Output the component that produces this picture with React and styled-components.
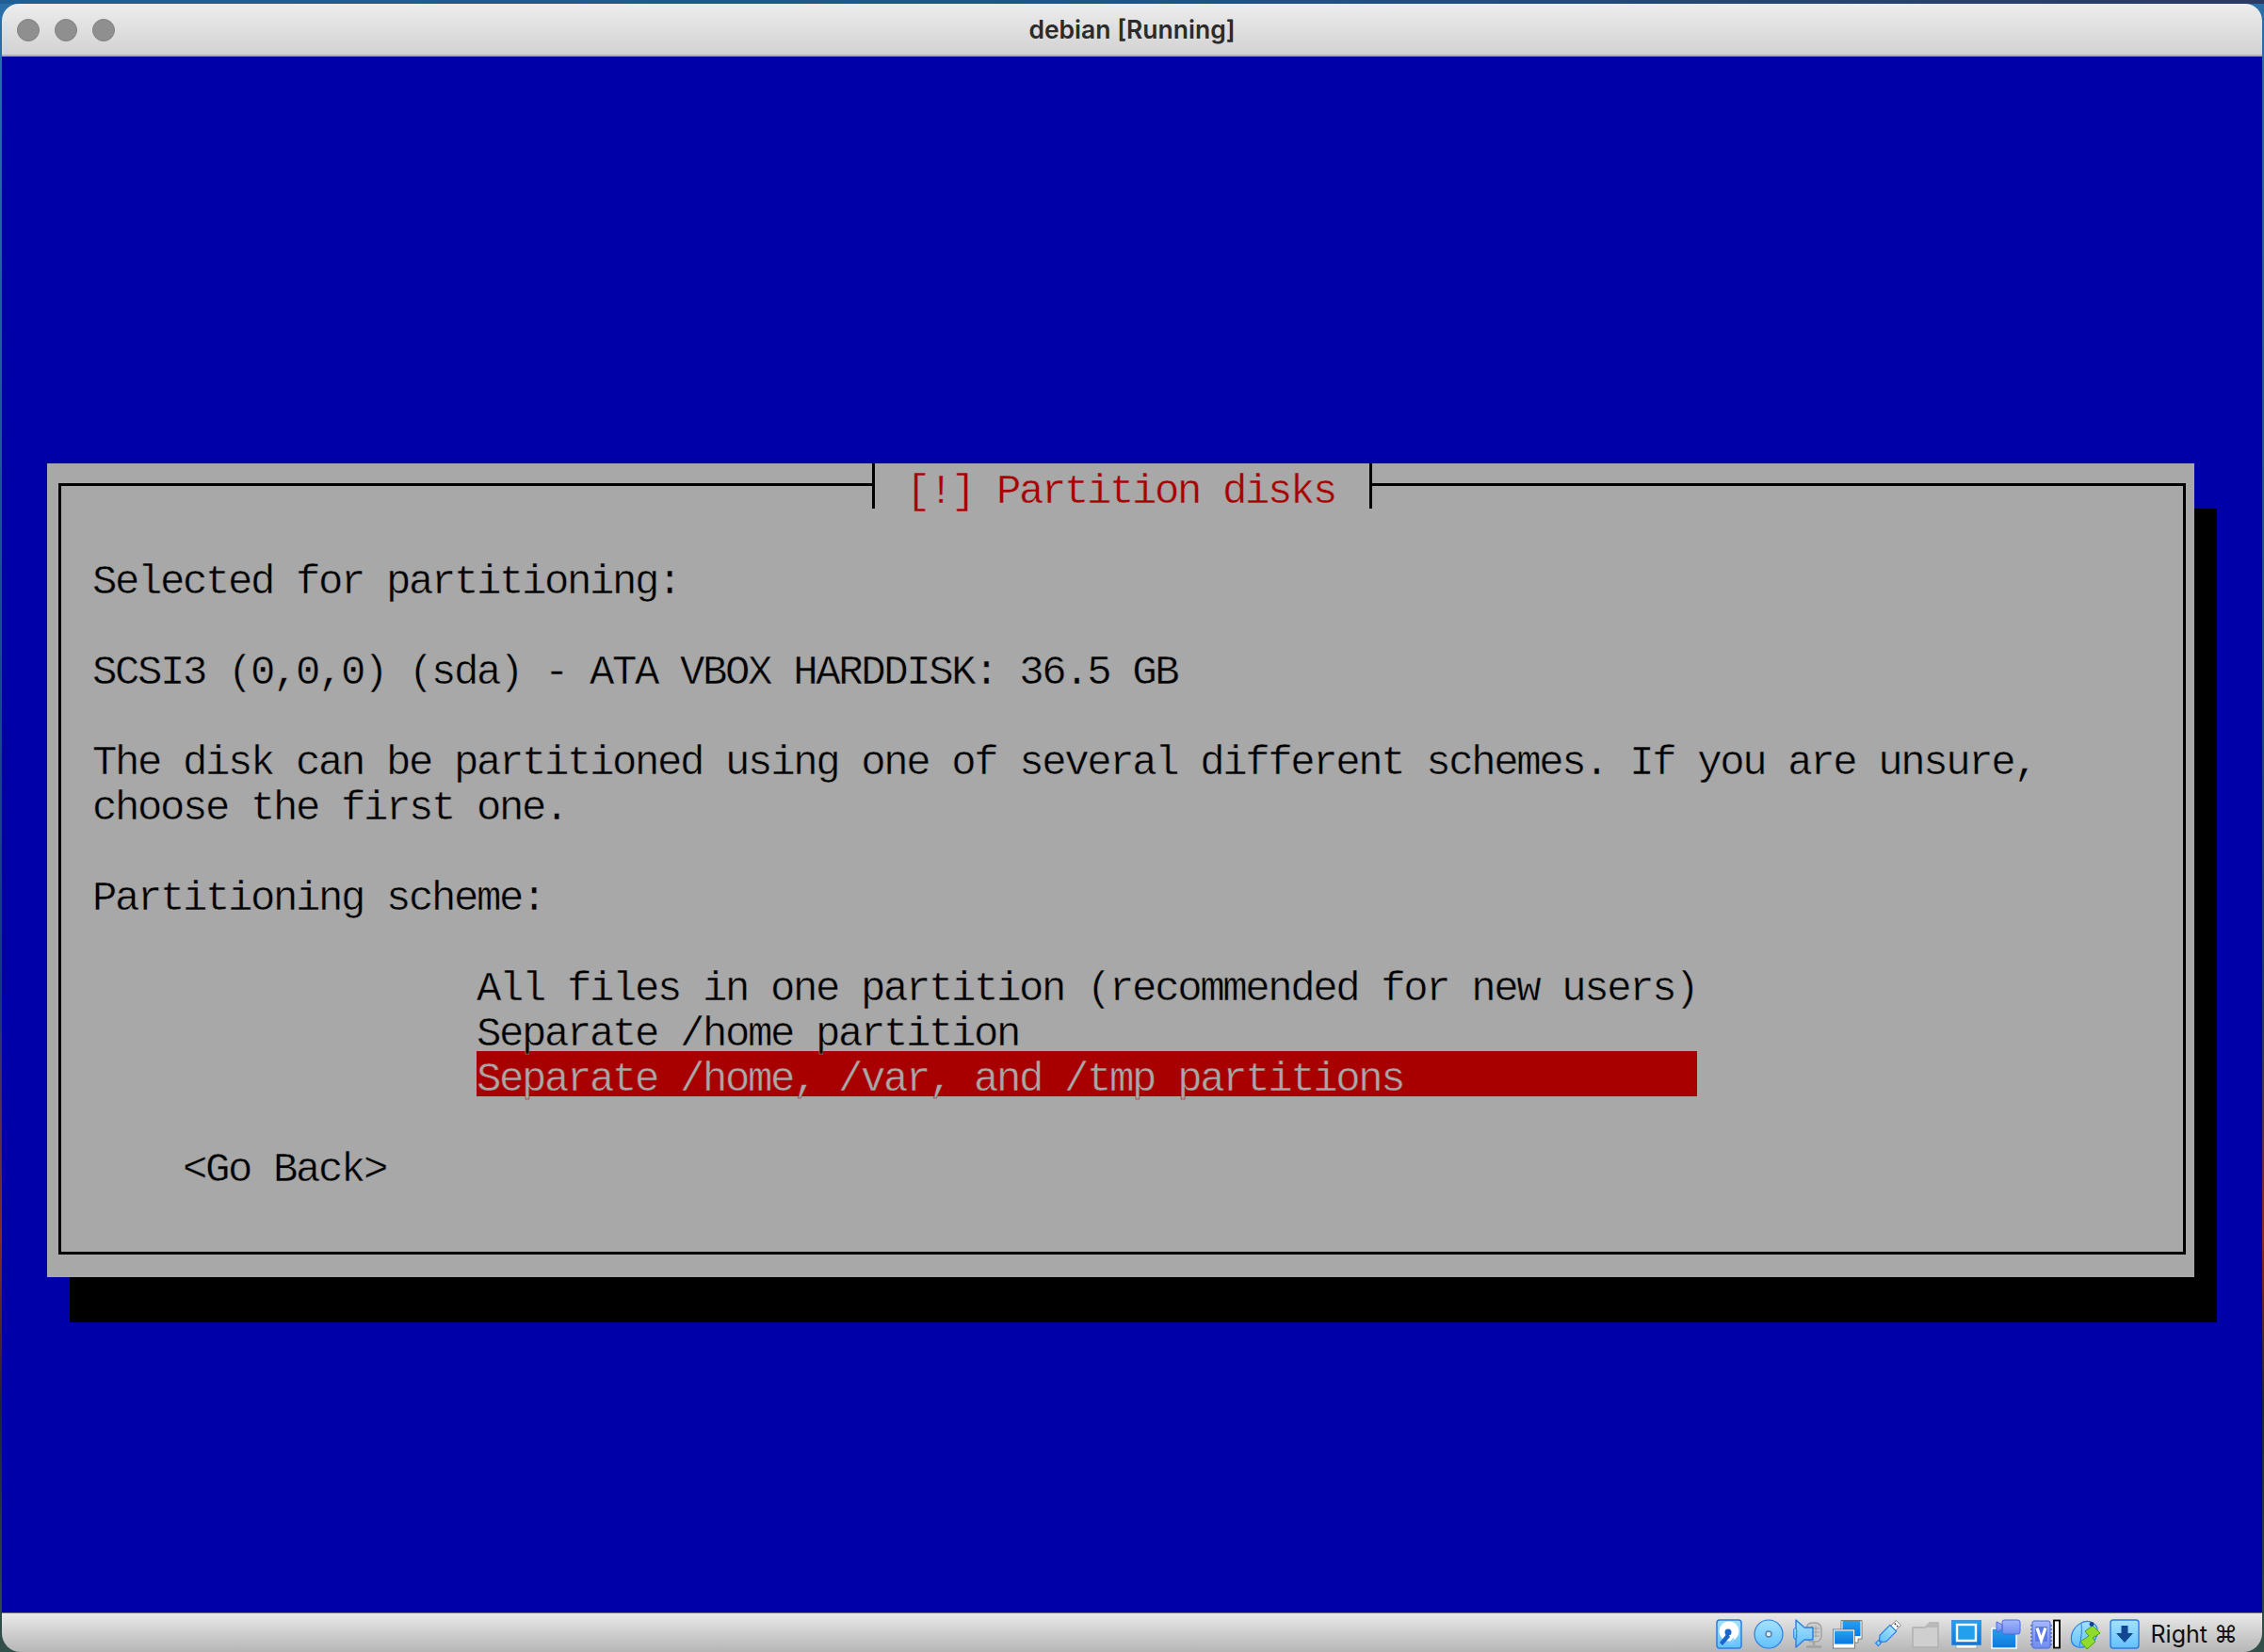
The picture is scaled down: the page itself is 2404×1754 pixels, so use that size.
import React from 'react';
import styled, {createGlobalStyle, css} from 'styled-components';

const cBlue = '#0000a8';
const cGrey = '#a8a8a8';
const cRed = '#a80000';

const GlobalStyle = createGlobalStyle`
  html, body {
    margin: 0;
    padding: 0;
    background: #1d3d66;
  }
`;

const Desktop = styled.div`
  box-sizing: border-box;
  width: 2404px;
  height: 1754px;
  padding: 4px 2px 0;
  overflow: hidden;
  background:
    linear-gradient(90deg, #1f5f96 0%, #1f5585 50%, #2b3a62 100%) top / 100% 4px no-repeat,
    linear-gradient(180deg, #2b6fa8 0%, #163a78 60%, #8a2a20 75%, #1c2430 85%, #33504a 100%);
`;

const Window = styled.div`
  display: flex;
  flex-direction: column;
  height: 1750px;
  border-radius: 18px 18px 20px 20px;
  overflow: hidden;
`;

const TitleBar = styled.header`
  position: relative;
  box-sizing: border-box;
  flex: none;
  height: 56px;
  display: flex;
  align-items: center;
  justify-content: center;
  background: linear-gradient(180deg, #ededed 0%, #d2d2d2 100%);
  border-bottom: 2px solid #adadad;
`;

const Lights = styled.div`
  position: absolute;
  left: 16px;
  top: 16px;
  display: flex;
  gap: 16px;
`;

const Light = styled.span`
  box-sizing: border-box;
  width: 24px;
  height: 24px;
  border-radius: 50%;
  background: #8f8f8f;
  border: 1px solid #808080;
`;

const WindowTitle = styled.h1`
  margin: 0;
  font-family: Inter, "Liberation Sans", sans-serif;
  font-size: 26.5px;
  font-weight: 600;
  color: #2b2b2b;
`;

const Screen = styled.main`
  flex: 1;
  padding: 432px 0 0 48px;
  background: ${cBlue};
`;

const Dialog = styled.section`
  position: relative;
  box-sizing: border-box;
  width: 2280px;
  height: 864px;
  padding: 21px 9px 24px 12px;
  background: ${cGrey};
  box-shadow: 24px 48px 0 #000;
`;

const Frame = styled.div`
  box-sizing: border-box;
  height: 819px;
  padding: 72px 33px 0;
  border: 3px solid #000;
`;

// one terminal line: 24px wide cells, 48px high. The stroke in the background
// colour thins the glyphs down to the console font's weight.
const cell = css`
  display: block;
  box-sizing: border-box;
  height: 48px;
  padding-top: 12px;
  margin: 0;
  font-family: "Liberation Mono", monospace;
  font-size: 44px;
  font-weight: 400;
  line-height: 36px;
  letter-spacing: -2.4px;
  white-space: pre;
  -webkit-text-stroke: 0.5px ${p => p.$selected ? cRed : cGrey};
`;

const DialogTitle = styled.h2`
  ${cell};
  position: absolute;
  top: 0;
  left: 876px;
  width: 531px;
  padding-left: 9px;
  color: ${cRed};
  background: ${cGrey};
  border-left: 3px solid #000;
  border-right: 3px solid #000;
`;

const Line = styled.p`
  ${cell};
  color: #000;
  margin-bottom: ${p => p.$gap ? '48px' : '0'};
`;

const Options = styled.ul`
  list-style: none;
  margin: 0 0 48px 408px;
  padding: 0;
  width: 1296px;
`;

const Option = styled.li`
  ${cell};
  background: ${p => p.$selected ? cRed : 'transparent'};
  color: ${p => p.$selected ? cGrey : '#000'};
`;

const BackButton = styled.div`
  ${cell};
  color: #000;
  margin-left: 96px;
`;

const StatusBar = styled.footer`
  box-sizing: border-box;
  flex: none;
  height: 42px;
  display: flex;
  align-items: center;
  justify-content: flex-end;
  gap: 10px;
  padding: 2px 26px 0 0;
  background: linear-gradient(180deg, #e9e9e9 0%, #b6b6b6 100%);
  border-top: 1px solid #777;
`;

const HostKey = styled.span`
  margin-left: 2px;
  font-family: Inter, "Liberation Sans", sans-serif;
  font-size: 25px;
  color: #111;
`;

const Icon = styled.svg`
  flex: none;
  width: 32px;
  height: 32px;
`;

const Defs = () => (
    <svg width="0" height="0" style={{position: 'absolute'}}>
        <defs>
            <linearGradient id="sky" x1="0" y1="0" x2="0" y2="1">
                <stop offset="0" stopColor="#a5e2ff"/>
                <stop offset="1" stopColor="#62c0fb"/>
            </linearGradient>
            <linearGradient id="deep" x1="0" y1="0" x2="0" y2="1">
                <stop offset="0" stopColor="#2aa0ec"/>
                <stop offset="1" stopColor="#0a78e0"/>
            </linearGradient>
            <linearGradient id="violet" x1="0" y1="0" x2="0" y2="1">
                <stop offset="0" stopColor="#a5b8fb"/>
                <stop offset="1" stopColor="#6f8cf0"/>
            </linearGradient>
        </defs>
    </svg>
);

const HddIcon = () => (
    <Icon viewBox="0 0 32 32">
        <rect x="3" y="1" width="26" height="30" rx="3" fill="url(#sky)" stroke="#2a7de1" strokeWidth="1.5"/>
        <circle cx="16" cy="13" r="10.5" fill="#fff"/>
        <circle cx="15" cy="14" r="3.5" fill="#1c66c8"/>
        <path d="M14 15 L6 25 L9 28 L17 19 Z" fill="#1c66c8"/>
        <path d="M21 19 L12 29 L21 29 Z" fill="url(#sky)"/>
    </Icon>
);

const DiscIcon = () => (
    <Icon viewBox="0 0 32 32">
        <circle cx="16" cy="16" r="15" fill="url(#sky)" stroke="#2a7de1" strokeWidth="1.2"/>
        <circle cx="16" cy="16" r="3" fill="#d7f0ff" stroke="#5f7f9f" strokeWidth="1.4"/>
    </Icon>
);

const AudioIcon = () => (
    <Icon viewBox="0 0 32 32">
        <rect x="14" y="4" width="16" height="20" rx="6" fill="#cdcdcd" stroke="#a2a2a2" strokeWidth="1.5"/>
        <path d="M20 7v13M24 7v13M18 10h10M18 14h10M18 18h10" stroke="#a2a2a2" strokeWidth="1"/>
        <path d="M22 24v4M14 29.5h16" stroke="#a2a2a2" strokeWidth="2.5"/>
        <path d="M3 1 L12 9 H21 V22 H12 L3 30 Z" fill="url(#sky)" stroke="#2a7de1" strokeWidth="1.4" strokeLinejoin="round"/>
        <rect x="0.7" y="10" width="3" height="11" rx="1.2" fill="url(#sky)" stroke="#2a7de1"/>
    </Icon>
);

const NetworkIcon = () => (
    <Icon viewBox="0 0 32 32">
        <path d="M9 1.5 H31 V21 H27 V25 H9 Z" fill="#fff" stroke="#666" strokeWidth="0.8"/>
        <rect x="10.5" y="2" width="19" height="16" fill="url(#deep)"/>
        <rect x="0.5" y="11" width="23" height="20" fill="#fff" stroke="#666" strokeWidth="0.8"/>
        <rect x="2" y="12.5" width="20" height="14" fill="url(#deep)"/>
    </Icon>
);

const UsbIcon = () => (
    <Icon viewBox="0 0 32 32">
        <g transform="rotate(45 16 16) translate(16 16) scale(0.8) translate(-16 -16)">
            <rect x="11.5" y="-5" width="9" height="10" fill="#fff" stroke="#555" strokeWidth="0.8"/>
            <rect x="13" y="-2" width="2" height="2" fill="#333"/>
            <rect x="17" y="-2" width="2" height="2" fill="#333"/>
            <path d="M10 5 H22 V24 L18 29 H14 L10 24 Z" fill="url(#sky)" stroke="#2a7de1" strokeWidth="1.5" strokeLinejoin="round"/>
            <rect x="13.5" y="30.5" width="5" height="5" fill="url(#sky)" stroke="#2a7de1" strokeWidth="1.4"/>
        </g>
    </Icon>
);

const FolderIcon = () => (
    <Icon viewBox="0 0 32 32">
        <path d="M1 9 H14 L19 4 H28 V30 H1 Z" fill="#cfcfcf" stroke="#aeaeae" strokeWidth="1.4" strokeLinejoin="round"/>
        <path d="M19 4 H28 V9 H14 Z" fill="#b9b9b9"/>
    </Icon>
);

const DisplayIcon = () => (
    <Icon viewBox="0 0 32 32">
        <path d="M5 27 H27 V31 H5 Z" fill="#fff" stroke="#888" strokeWidth="0.6"/>
        <rect x="0.5" y="1.5" width="31" height="26" fill="url(#deep)"/>
        <rect x="0.5" y="1.5" width="31" height="26" fill="none" stroke="#3b88d8" strokeWidth="0.8"/>
        <rect x="6" y="6" width="20" height="17" fill="#22a0ee" stroke="#fff" strokeWidth="2.4"/>
    </Icon>
);

const CaptureIcon = () => (
    <Icon viewBox="0 0 32 32">
        <rect x="1" y="10" width="26" height="21" fill="url(#deep)" stroke="#fff" strokeWidth="1.4"/>
        <rect x="12" y="1" width="19" height="15" rx="2.5" fill="url(#violet)" stroke="#4d6bd8" strokeWidth="1"/>
        <path d="M12 6 L6 3 V14 L12 11 Z" fill="url(#violet)" stroke="#4d6bd8" strokeWidth="1"/>
    </Icon>
);

const ChipIcon = () => (
    <Icon viewBox="0 0 32 32">
        <rect x="2" y="2" width="19" height="29" rx="2" fill="url(#violet)" stroke="#4d6bd8" strokeWidth="1"/>
        <path d="M0 7h2M0 11h2M0 15h2M0 19h2M0 23h2M0 27h2M21 7h2M21 11h2M21 15h2M21 19h2M21 23h2M21 27h2" stroke="#4d6bd8" strokeWidth="1.6"/>
        <rect x="5" y="8" width="13" height="16" rx="1" fill="#5c78e4"/>
        <path d="M7 9.5 L11.5 22.5 L16 9.5" fill="none" stroke="#fff" strokeWidth="3.2"/>
        <rect x="25" y="1.5" width="6" height="29" fill="#fff" stroke="#000" strokeWidth="1.8"/>
    </Icon>
);

const GlobeIcon = () => (
    <Icon viewBox="0 0 32 32">
        <path d="M22 3 C27 5 30 9 29 15 C28 24 19 31 9 30 C3 29 0 24 2 16 C4 8 14 0 22 3 Z" fill="url(#sky)" stroke="#2a7de1" strokeWidth="1.2"/>
        <path d="M12 5 C13 12 12 20 10 29" fill="none" stroke="#2a7de1" strokeWidth="1"/>
        <path d="M24 7 L32 15 L24 20 L27 24 L18 32 L11 24 L20 18 L16 13 Z" fill="#8fdc2c" stroke="#4f9e14" strokeWidth="1" strokeLinejoin="round"/>
        <circle cx="23" cy="5.5" r="2.4" fill="#123f92"/>
    </Icon>
);

const DownloadIcon = () => (
    <Icon viewBox="0 0 32 32">
        <rect x="1" y="1" width="30" height="30" rx="3" fill="url(#sky)" stroke="#2a7de1" strokeWidth="1.4"/>
        <path d="M12.5 7 H19.5 V15 H25 L16 25 L7 15 H12.5 Z" fill="#12478f"/>
    </Icon>
);

const App = () => (
    <Desktop>
        <GlobalStyle/>
        <Defs/>
        <Window>
            <TitleBar>
                <Lights>
                    <Light/>
                    <Light/>
                    <Light/>
                </Lights>
                <WindowTitle>debian [Running]</WindowTitle>
            </TitleBar>
            <Screen>
                <Dialog>
                    <DialogTitle>{' [!] Partition disks '}</DialogTitle>
                    <Frame>
                        <Line $gap>Selected for partitioning:</Line>
                        <Line $gap>SCSI3 (0,0,0) (sda) - ATA VBOX HARDDISK: 36.5 GB</Line>
                        <Line>The disk can be partitioned using one of several different schemes. If you are unsure,</Line>
                        <Line $gap>choose the first one.</Line>
                        <Line $gap>Partitioning scheme:</Line>
                        <Options>
                            <Option>All files in one partition (recommended for new users)</Option>
                            <Option>Separate /home partition</Option>
                            <Option $selected>Separate /home, /var, and /tmp partitions</Option>
                        </Options>
                        <BackButton>{'<Go Back>'}</BackButton>
                    </Frame>
                </Dialog>
            </Screen>
            <StatusBar>
                <HddIcon/>
                <DiscIcon/>
                <AudioIcon/>
                <NetworkIcon/>
                <UsbIcon/>
                <FolderIcon/>
                <DisplayIcon/>
                <CaptureIcon/>
                <ChipIcon/>
                <GlobeIcon/>
                <DownloadIcon/>
                <HostKey>Right ⌘</HostKey>
            </StatusBar>
        </Window>
    </Desktop>
);

export default App;
